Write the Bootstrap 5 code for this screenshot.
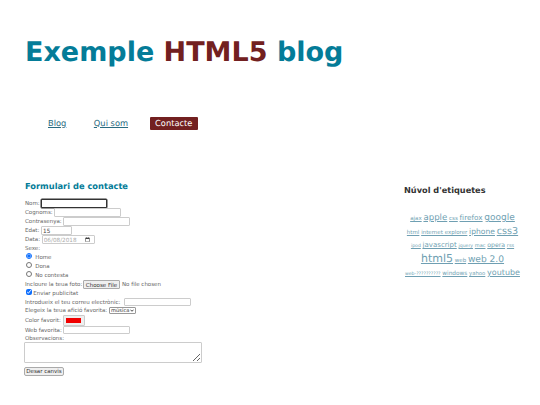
<!DOCTYPE html>
<html lang="ca">
<head>
<meta charset="utf-8">
<title>Exemple HTML5 blog</title>
<link rel="stylesheet" href="https://cdn.jsdelivr.net/npm/bootstrap@5.3.0/dist/css/bootstrap.min.css">
<style>
html,body{height:405px;overflow:hidden}
body{font-family:"DejaVu Sans",sans-serif;color:#666;background:#fff;font-size:5.5px;line-height:9px;text-rendering:geometricPrecision}
.page-wrap{padding:36px 0 0 25px;width:540px}
.site-title{font-size:27px;line-height:33px;font-weight:700;color:#047c98;margin:0}
.site-title span{color:#722020}
.main-nav{margin-top:46px;padding-left:17px;gap:15.5px;height:16px;font-size:8.3px;line-height:13px;margin-bottom:0}
.main-nav a{color:#2a6b80;padding:0 6px;display:block}
.main-nav a.current{background:#722020;color:#fff;text-decoration:none;padding:0 5.5px;border-radius:1px}
.body-cols{margin-top:49px}
.form-col{width:379px;flex:none}
.form-title{font-size:8.3px;line-height:12px;font-weight:700;color:#047c98;margin:0 0 7px}
.frow{height:9px;display:flex;align-items:center;white-space:pre;color:#666;padding-top:2px;box-sizing:border-box}
.frow.h8{height:8px}
.frow.h11{height:11px}
.frow input,.frow button,.frow select,.frow .color-swatch{margin-bottom:2px}
.frow input[type=text],.frow input[type=password],.frow input[type=number],.frow input[type=email],.frow input[type=url],.frow input[type=date]{font:5.7px "DejaVu Sans",sans-serif;height:8.6px;padding:0 1px;border:1px solid #ccc;border-radius:1px;box-sizing:border-box;background:#fff;color:#444;outline:0}
.frow input[type=date]{color:#aaa;height:9.5px}
.frow input[type=email]{margin-left:1.5px}
.frow input[type=url]{margin-left:-1px}
.frow input.focused{border:1px solid #333;box-shadow:0 0 0 .5px #333}
.frow input[type=radio],.frow input[type=checkbox]{width:6px;height:6px;margin:0 1.5px 6px 1px;accent-color:#0d6efd}
.frow input[type=checkbox]{margin:0 -.5px 6px 1px}
.file-btn{font:5.5px "DejaVu Sans",sans-serif;background:#efefef;border:1px solid #aaa;border-radius:1px;color:#333;padding:0;width:37px;height:8.5px;line-height:6px;margin:0 2px 2px -1px}
.frow select{font:5.2px "DejaVu Sans",sans-serif;height:7px;width:27px;padding:0 0 0 1px;border:1px solid #999;border-radius:1px;color:#333;background:#fff url("data:image/svg+xml,%3Csvg xmlns='http://www.w3.org/2000/svg' viewBox='0 0 8 5'%3E%3Cpath d='M1 1l3 3 3-3' fill='none' stroke='%23222' stroke-width='1.6'/%3E%3C/svg%3E") no-repeat right 1px center/3.5px 2.5px;appearance:none;line-height:5px}
.color-swatch{display:inline-block;width:22px;height:11px;border:1px solid #ccc;border-radius:1px;background:#efefef;padding:2px 2.5px}
.color-swatch i{display:block;height:100%;background:#f00000}
.notes{display:block;width:178px;height:21px;border:1px solid #ccc;border-radius:1px;margin:0 0 4px -1px;padding:0;resize:both;outline:0}
.save-btn{font:5.5px "DejaVu Sans",sans-serif;background:#efefef;border:1px solid #aaa;border-radius:2px;color:#333;height:8.5px;width:40px;padding:0;line-height:6px;display:block;margin-left:-1px}
.cloud-col{width:120px;flex:none}
.cloud-title{font-size:8.2px;line-height:12px;font-weight:700;color:#333;margin:4px 0 15px}
.tagcloud{text-align:center;width:117px;white-space:nowrap}
.tagcloud a{color:#6f9fb2}
.tagline{height:14px;line-height:14px}
.tagline.r2{height:12px;line-height:12px}
.tagline.r4{height:15px;line-height:15px}
.s46{font-size:4.6px}.s50{font-size:5px}.s55{font-size:5.5px}.s58{font-size:5.8px}.s53{font-size:5.3px}.s62{font-size:6.2px}.s70{font-size:7px}.s73{font-size:7.3px}.s76{font-size:7.6px}.s80{font-size:8px}.s82{font-size:8.6px}.s88{font-size:9px}.s91{font-size:9.1px}.s96{font-size:9.6px}.s110{font-size:11px}
</style>
</head>
<body>
<div class="page-wrap">
  <h1 class="site-title">Exemple <span>HTML5</span> blog</h1>
  <ul class="main-nav list-unstyled d-flex align-items-center">
    <li><a href="#">Blog</a></li>
    <li><a href="#">Qui som</a></li>
    <li><a href="#" class="current">Contacte</a></li>
  </ul>
  <div class="body-cols d-flex">
    <div class="form-col">
      <h2 class="form-title">Formulari de contacte</h2>
      <form>
        <div class="frow">Nom: <input type="text" class="focused" style="width:66px"></div>
        <div class="frow">Cognoms: <input type="text" style="width:67px"></div>
        <div class="frow">Contrasenya: <input type="password" style="width:67px"></div>
        <div class="frow">Edat: <input type="number" value="15" style="width:31px"></div>
        <div class="frow">Data: <input type="date" value="2018-06-08" style="width:53px"></div>
        <div class="frow">Sexe:</div>
        <div class="frow"><input type="radio" name="s" checked> Home</div>
        <div class="frow"><input type="radio" name="s"> Dona</div>
        <div class="frow"><input type="radio" name="s"> No contesta</div>
        <div class="frow">Incloure la teua foto: <button type="button" class="file-btn">Choose File</button>No file chosen</div>
        <div class="frow"><input type="checkbox" checked> Enviar publicitat</div>
        <div class="frow h8">Introdueix el teu correu electrònic: <input type="email" style="width:67px"></div>
        <div class="frow">Elegeix la teua afició favorita: <select><option>música</option></select></div>
        <div class="frow h11">Color favorit: <span class="color-swatch"><i></i></span></div>
        <div class="frow h8">Web favorita: <input type="url" style="width:67px"></div>
        <div class="frow h8">Observacions:</div>
        <textarea class="notes"></textarea>
        <button type="button" class="save-btn">Desar canvis</button>
      </form>
    </div>
    <aside class="cloud-col">
      <h2 class="cloud-title">Núvol d'etiquetes</h2>
      <div class="tagcloud">
        <div class="tagline"><a class="s55" href="#">ajax</a> <a class="s82" href="#">apple</a> <a class="s55" href="#">css</a> <a class="s73" href="#">firefox</a> <a class="s88" href="#">google</a></div>
        <div class="tagline"><a class="s55" href="#">html</a> <a class="s55" href="#">internet explorer</a> <a class="s76" href="#">iphone</a> <a class="s96" href="#">css3</a></div>
        <div class="tagline r2"><a class="s46" href="#">ipod</a> <a class="s70" href="#">javascript</a> <a class="s46" href="#">jquery</a> <a class="s50" href="#">mac</a> <a class="s62" href="#">opera</a> <a class="s50" href="#">rss</a></div>
        <div class="tagline r4"><a class="s110" href="#">html5</a> <a class="s55" href="#">web</a> <a class="s91" href="#">web 2.0</a></div>
        <div class="tagline"><a class="s46" href="#">web-??????????</a> <a class="s58" href="#">windows</a> <a class="s53" href="#">yahoo</a> <a class="s80" href="#">youtube</a></div>
      </div>
    </aside>
  </div>
</div>
</body>
</html>
